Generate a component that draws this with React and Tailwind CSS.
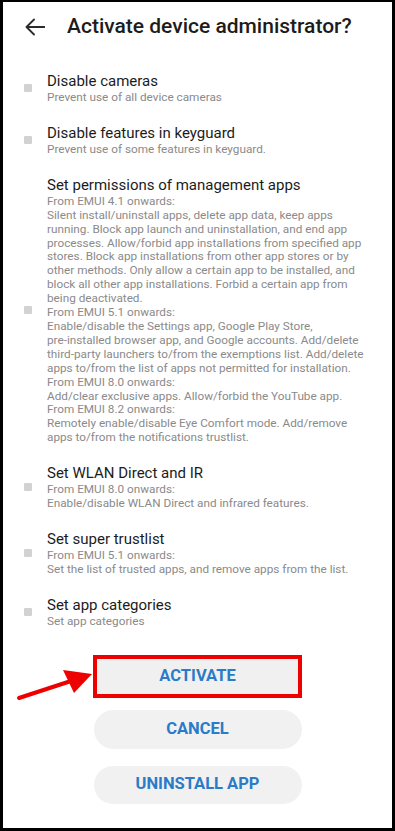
const items = [
  {
    title: "Disable cameras",
    lines: ["Prevent use of all device cameras"],
  },
  {
    title: "Disable features in keyguard",
    lines: ["Prevent use of some features in keyguard."],
  },
  {
    title: "Set permissions of management apps",
    lines: [
      "From EMUI 4.1 onwards:",
      "Silent install/uninstall apps, delete app data, keep apps",
      "running. Block app launch and uninstallation, and end app",
      "processes. Allow/forbid app installations from specified app",
      "stores. Block app installations from other app stores or by",
      "other methods. Only allow a certain app to be installed, and",
      "block all other app installations. Forbid a certain app from",
      "being deactivated.",
      "From EMUI 5.1 onwards:",
      "Enable/disable the Settings app, Google Play Store,",
      "pre-installed browser app, and Google accounts. Add/delete",
      "third-party launchers to/from the exemptions list. Add/delete",
      "apps to/from the list of apps not permitted for installation.",
      "From EMUI 8.0 onwards:",
      "Add/clear exclusive apps. Allow/forbid the YouTube app.",
      "From EMUI 8.2 onwards:",
      "Remotely enable/disable Eye Comfort mode. Add/remove",
      "apps to/from the notifications trustlist.",
    ],
  },
  {
    title: "Set WLAN Direct and IR",
    lines: ["From EMUI 8.0 onwards:", "Enable/disable WLAN Direct and infrared features."],
  },
  {
    title: "Set super trustlist",
    lines: ["From EMUI 5.1 onwards:", "Set the list of trusted apps, and remove apps from the list."],
  },
  {
    title: "Set app categories",
    lines: ["Set app categories"],
  },
];

const PolicyItem = ({ title, lines }) => (
  <div className="flex items-center py-[9px]">
    <div className="w-[8px] h-[8px] rounded-[1px] bg-[#d2d2d2] flex-shrink-0"></div>
    <div className="ml-[15px] min-w-0">
      <div className="text-[15px] leading-[20px] text-[#1c1c1c]">{title}</div>
      {lines.map((line, i) => (
        <div
          key={i}
          className="text-[11.75px] leading-[13.9px] text-[#8a8a8a] whitespace-nowrap"
        >
          {line}
        </div>
      ))}
    </div>
  </div>
);

const App = () => {
  return (
    <div
      className="relative w-[395px] h-[831px] bg-white border-black border-l-[3px] border-r-[3px] border-t-2 border-b-[3px] overflow-hidden"
      style={{ fontFamily: "Roboto, 'Liberation Sans', sans-serif" }}
    >
      {/* header */}
      <div className="flex items-center h-[28px] mt-[11px] pl-[22px]">
        <svg width="20" height="18" viewBox="0 0 20 18" fill="none">
          <path
            d="M19.5 9H1.5M9 1.5L1.5 9L9 16.5"
            stroke="#2b2b2b"
            strokeWidth="1.8"
            strokeLinecap="round"
            strokeLinejoin="round"
          />
        </svg>
        <h1 className="ml-[22px] text-[21px] font-medium text-[#1c1c1c] whitespace-nowrap">
          Activate device administrator?
        </h1>
      </div>

      {/* permissions list */}
      <div className="mt-[21px] pl-[21px]">
        {items.map((item) => (
          <PolicyItem key={item.title} title={item.title} lines={item.lines} />
        ))}
      </div>

      {/* buttons */}
      <div className="flex flex-col items-center mt-[17px]">
        <button className="w-[209px] h-[43px] border-4 border-[#ee0000] bg-[#f0f0f0] text-[16.5px] font-bold text-[#2a7bc8]">
          ACTIVATE
        </button>
        <button className="w-[208px] h-[39px] mt-[12px] rounded-full bg-[#f1f1f1] text-[16.5px] font-bold text-[#2a7bc8]">
          CANCEL
        </button>
        <button className="w-[208px] h-[38px] mt-[17px] rounded-full bg-[#f1f1f1] text-[16.5px] font-bold text-[#2a7bc8]">
          UNINSTALL APP
        </button>
      </div>

      {/* red pointer arrow */}
      <svg
        className="absolute left-0 top-0 pointer-events-none"
        width="395"
        height="831"
        viewBox="0 0 395 831"
      >
        <line x1="16" y1="696" x2="68" y2="679" stroke="#ee0000" strokeWidth="4" strokeLinecap="round" />
        <polygon points="89,672 60,668 71,691" fill="#ee0000" />
      </svg>
    </div>
  );
};

export default App;
